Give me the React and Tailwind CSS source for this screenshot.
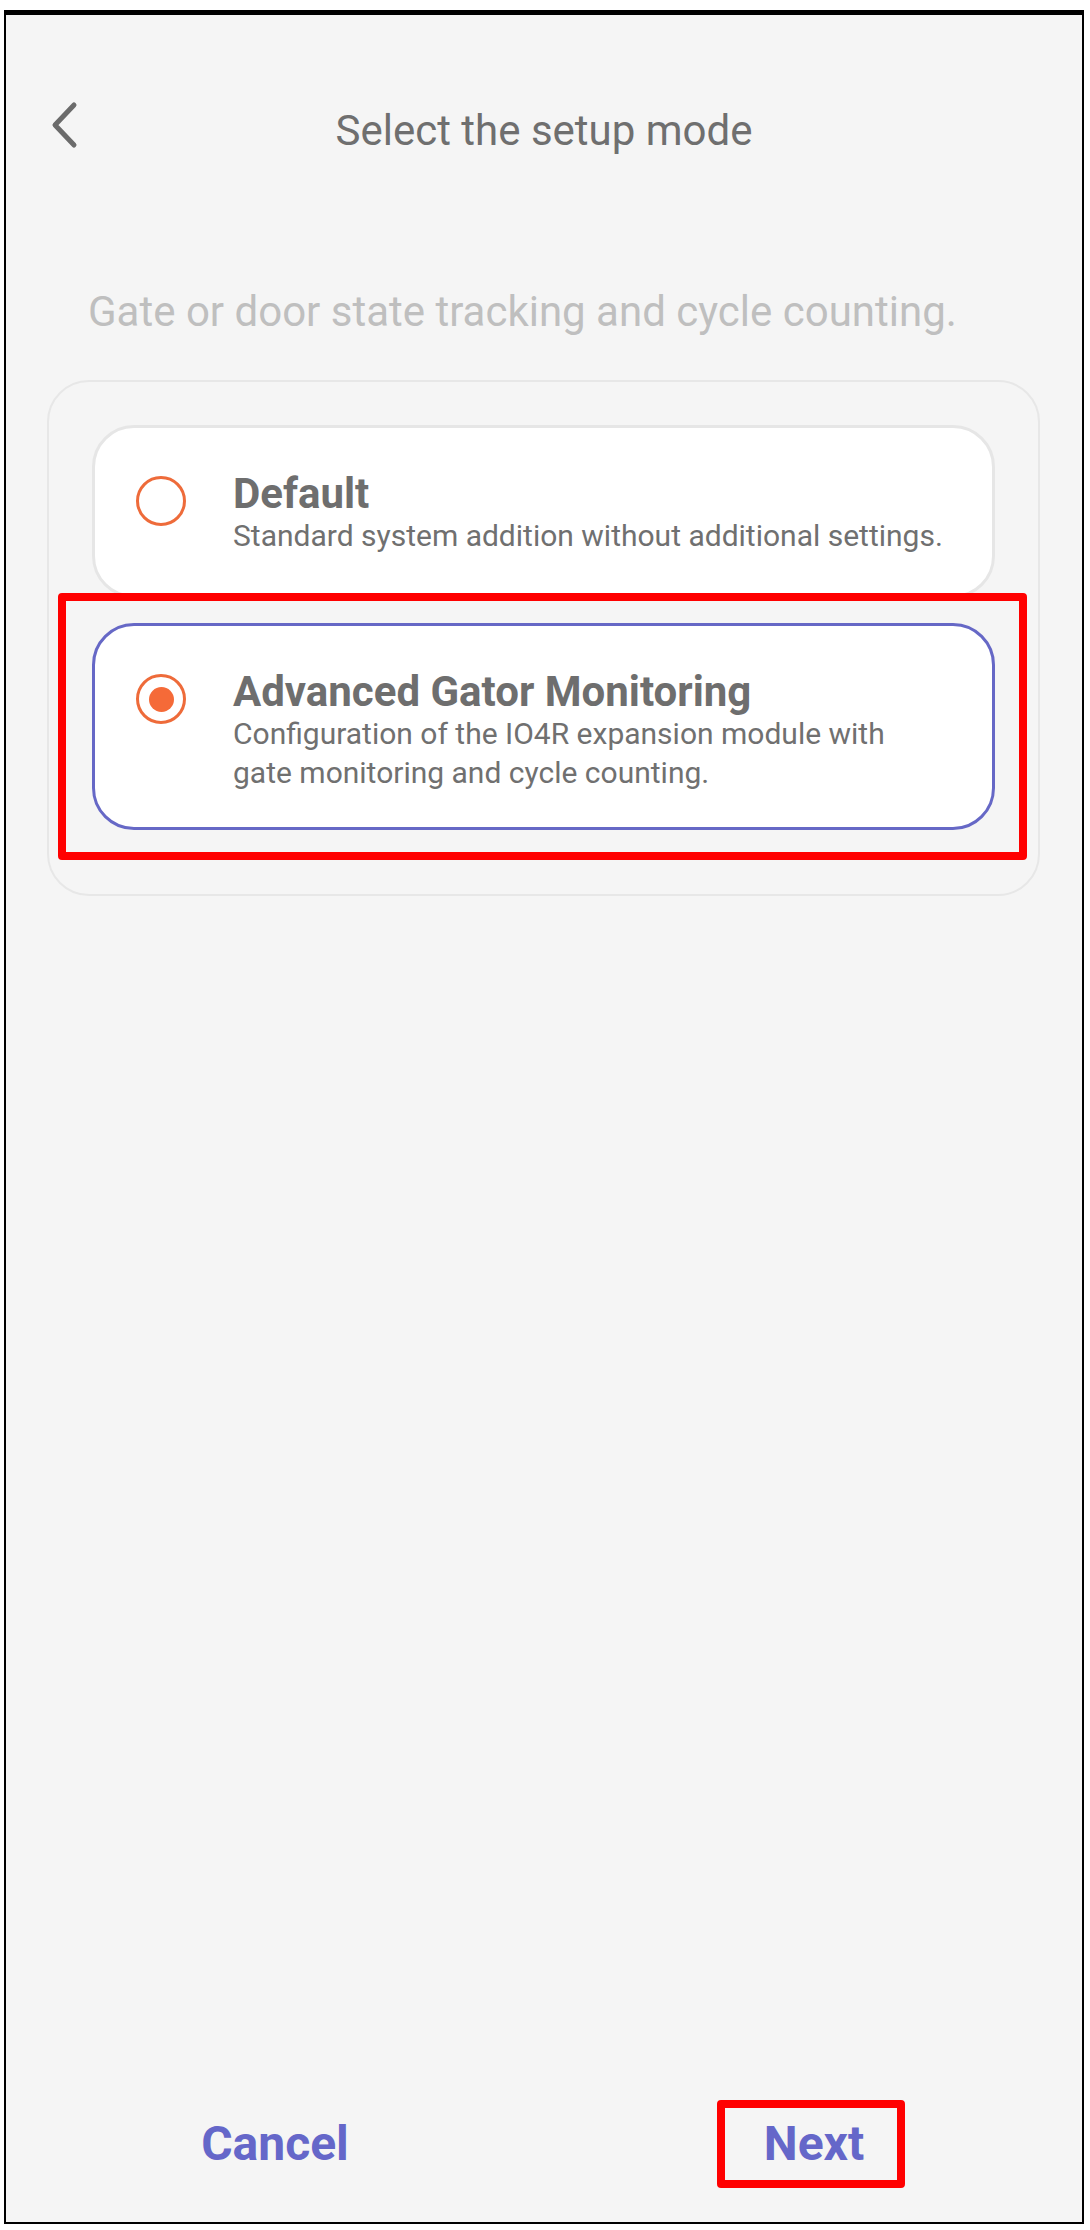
import React, { useState } from "react";

const modes = [
  {
    id: "default",
    title: "Default",
    desc: "Standard system addition without additional settings.",
  },
  {
    id: "advanced",
    title: "Advanced Gator Monitoring",
    desc: "Configuration of the IO4R expansion module with gate monitoring and cycle counting.",
  },
];

const Radio = ({ checked }) => (
  <div className="mt-[5px] w-[50px] h-[50px] shrink-0 rounded-full border-[3px] border-[#ee6b3a] flex items-center justify-center">
    {checked && <div className="w-[25px] h-[25px] rounded-full bg-[#f56a38]" />}
  </div>
);

const ModeCard = ({ mode, checked, onSelect }) => (
  <button
    type="button"
    onClick={onSelect}
    className={
      "w-full min-h-[173px] flex items-start gap-[47px] rounded-[42px] border-[3px] bg-white pl-[41px] pr-[30px] pt-[43px] pb-[35px] text-left " +
      (checked ? "border-[#6668c6]" : "border-[#e6e6e6]")
    }
  >
    <Radio checked={checked} />
    <div className="flex flex-col max-w-[712px]">
      <span className="text-[42px] leading-[45px] font-bold text-[#6e6e6e]">{mode.title}</span>
      <span className="text-[30px] leading-[39px] text-[#707070]">{mode.desc}</span>
    </div>
  </button>
);

// red marker frame drawn over a highlighted element
const Highlight = ({ className }) => (
  <div className={"pointer-events-none absolute border-[8px] border-[#ff0000] rounded-[4px] " + className} />
);

export default function App() {
  const [selected, setSelected] = useState("advanced");

  return (
    <div className="min-h-screen bg-white pt-[10px] pl-[4px]" style={{ fontFamily: "Roboto, 'Noto Sans', sans-serif" }}>
      <div className="w-[1080px] h-[2214px] border-x-2 border-b-2 border-t-[5px] border-black bg-[#f5f5f5] flex flex-col">
        {/* Header */}
        <div className="mt-[70px] h-[90px] grid grid-cols-[1fr_auto_1fr] items-center">
          <button type="button" className="justify-self-start ml-[41px] mb-[10px] p-[2px]">
            <svg width="30" height="48" viewBox="0 0 30 48" fill="none">
              <path d="M25 4L6 24l19 20" stroke="#6b6b6b" strokeWidth="5" strokeLinecap="round" strokeLinejoin="round" />
            </svg>
          </button>
          <h1 className="text-[42px] text-[#6f6f6f] font-normal">Select the setup mode</h1>
          <div />
        </div>

        <p className="mt-[113px] ml-[82px] text-[42px] leading-[48px] text-[#bfbfbf]">
          Gate or door state tracking and cycle counting.
        </p>

        {/* Mode list */}
        <div className="mt-[44px] ml-[41px] w-[993px] rounded-[42px] border-2 border-[#e7e7e7] px-[43px] pt-[43px] pb-[64px] flex flex-col gap-[25px]">
          {modes.map((m) => (
            <div key={m.id} className="relative">
              <ModeCard mode={m} checked={selected === m.id} onSelect={() => setSelected(m.id)} />
              {m.id === "advanced" && <Highlight className="-left-[34px] -right-[32px] -top-[30px] -bottom-[30px]" />}
            </div>
          ))}
        </div>

        {/* Footer actions */}
        <div className="mt-auto mb-[34px] h-[88px] grid grid-cols-2 items-center">
          <div className="flex justify-center">
            <button type="button" className="text-[48px] leading-none font-bold text-[#6567c9]">
              Cancel
            </button>
          </div>
          <div className="flex justify-center">
            <div className="relative w-[188px] h-[88px] -ml-[4px] flex items-center justify-center">
              <button type="button" className="text-[48px] leading-none font-bold text-[#6567c9] ml-[6px]">
                Next
              </button>
              <Highlight className="inset-0" />
            </div>
          </div>
        </div>
      </div>
    </div>
  );
}
